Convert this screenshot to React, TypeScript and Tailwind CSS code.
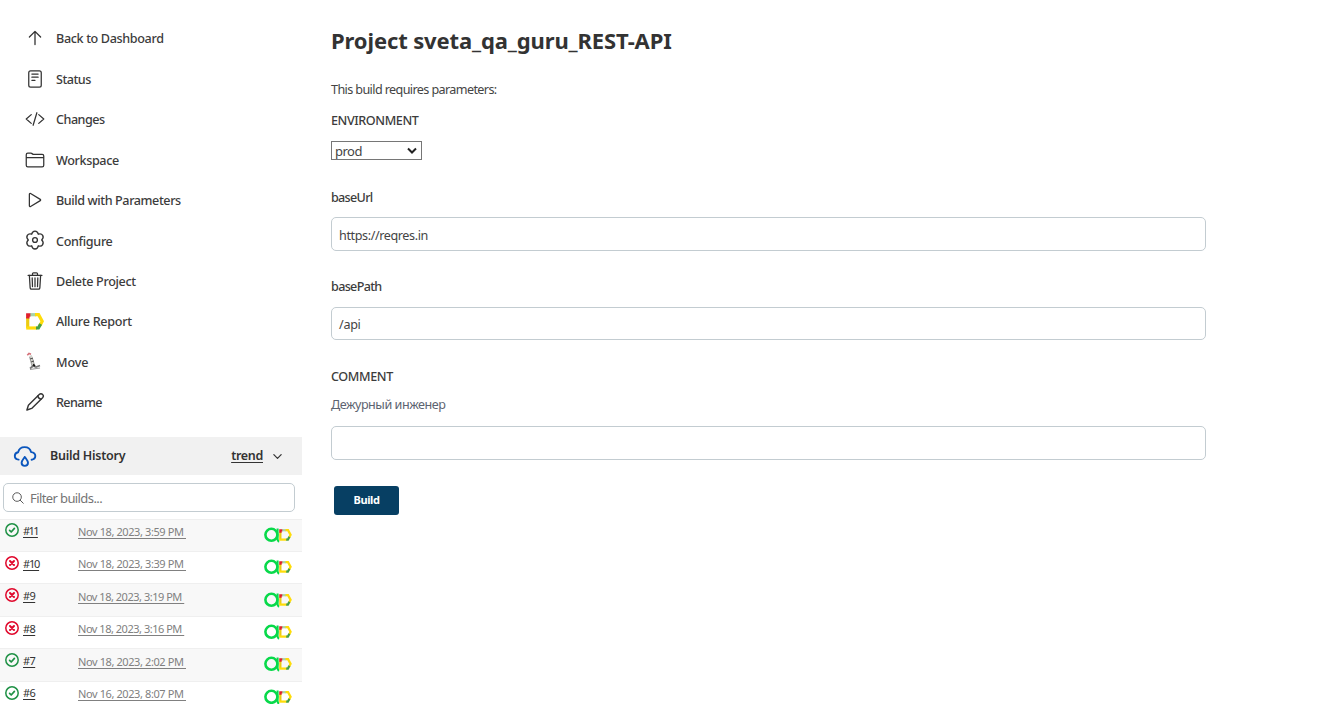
import type { ReactNode } from 'react';
import {
  IoChevronDownOutline,
  IoCodeSlashOutline,
  IoFolderOutline,
  IoPlayOutline,
  IoReaderOutline,
  IoSearchOutline,
  IoTrashOutline,
} from 'react-icons/io5';

function ArrowUpIcon() {
  return (
    <svg viewBox="0 0 20 20" className="size-5" fill="none" stroke="currentColor" strokeWidth="1.3" strokeLinecap="round" strokeLinejoin="round">
      <path d="M10 16.5V3.6M4.4 9L10 3.4L15.6 9" />
    </svg>
  );
}

function GearIcon() {
  return (
    <svg viewBox="0 0 20 20" className="size-5" fill="none" stroke="currentColor" strokeWidth="1.35" strokeLinejoin="round">
      <circle cx="10" cy="10" r="2.4" />
      <path d="M13.3 4.2C12.4 0 7.6 0 6.7 4.2C2.7 2.8 .2 7 3.3 10C.2 13 2.7 17.2 6.7 15.8C7.6 20 12.4 20 13.3 15.8C17.3 17.2 19.8 13 16.7 10C19.8 7 17.3 2.8 13.3 4.2Z" />
    </svg>
  );
}

function PencilIcon() {
  return (
    <svg viewBox="0 0 20 20" className="size-5" fill="none" stroke="currentColor" strokeWidth="1.4" strokeLinecap="round" strokeLinejoin="round">
      <path d="M1.9 18L3.4 13.2L14.2 2.5C15.2 1.5 16.7 1.5 17.6 2.5C18.5 3.4 18.5 4.8 17.6 5.8L6.7 16.4L1.9 18Z" />
      <path d="M12.8 4C13.2 5.8 14.3 6.9 16.1 7.1" />
    </svg>
  );
}

function AllureIcon({ className }: { className: string }) {
  return (
    <svg viewBox="0 0 18 17" className={className} fill="none" strokeWidth="3.2">
      <path d="M1.7 4V15" stroke="#eccb12" />
      <path d="M4 1.7H10" stroke="#a9d3aa" />
      <path d="M9 1.7H12.6L16.2 8.3L14 12.4" stroke="#ffdc0a" />
      <path d="M11 15H.2" stroke="#ffdc0a" />
      <path d="M14.6 11L12.4 15H10" stroke="#44a047" />
      <path d="M.2 2H4.4M1.8 .4V5.4" stroke="#e01f2d" strokeWidth="3.4" />
    </svg>
  );
}

function MoveIcon() {
  return (
    <svg viewBox="0 0 20 20" className="size-5" fill="none">
      <path d="M5.5 3.5L8.8 15" stroke="#d2d2cc" strokeWidth="2.8" />
      <path d="M4.6 5L7.2 15M7.4 6L9.8 14" stroke="#777" strokeWidth=".6" />
      <path d="M5 7L8 6M6 10L9 9" stroke="#333" strokeWidth=".8" />
      <path d="M2.3 3.3L4 1.5L6 2.2" stroke="#d47078" strokeWidth="1.6" />
      <path d="M5 16.5L8 14L11 15L15 13.5" stroke="#777" strokeWidth="1.8" />
      <path d="M5 17.5L15 16" stroke="#999" strokeWidth="1.2" />
      <path d="M8 12.5L10 14" stroke="#111" strokeWidth="1.6" />
    </svg>
  );
}

function CloudIcon() {
  return (
    <svg viewBox="0 0 24 24" className="size-6" fill="none" stroke="#0b56bd" strokeWidth="1.9" strokeLinecap="round" strokeLinejoin="round">
      <path d="M5.6 15.6C3.4 15.4 1.8 14 1.8 12C1.8 10 3.1 8.6 5.1 8.2C5.9 5.1 8.4 3.1 11.6 3.1C15 3.1 17.4 5.1 18.1 8.1C20.7 8.3 22.3 9.8 22.3 12.1C22.3 14.1 20.9 15.5 18.6 15.7" />
      <path d="M11.8 12.9C11 14.3 8.6 16.7 8.6 18.8C8.6 20.7 10 21.9 11.8 21.9C13.6 21.9 15 20.7 15 18.8C15 16.7 12.6 14.3 11.8 12.9Z" />
    </svg>
  );
}

function ResultIcon({ ok }: { ok: boolean }) {
  return (
    <svg viewBox="0 0 14 14" className="size-[14px] shrink-0" fill="none" stroke={ok ? '#1f9145' : '#e0082c'} strokeLinecap="round" strokeLinejoin="round">
      <circle cx="7" cy="7" r="6.2" strokeWidth="1.5" />
      {ok ? <path d="M4.6 7.4L6.2 9L9.4 5.4" strokeWidth="1.7" /> : <path d="M5 5L9 9M9 5L5 9" strokeWidth="2" />}
    </svg>
  );
}

function ReportBadges() {
  return (
    <span className="flex items-start">
      <svg viewBox="0 0 16 16" className="size-4" fill="none" stroke="#08d94a" strokeWidth="2.6">
        <circle cx="7.4" cy="7.8" r="6" />
        <path d="M13.6 1.4V11.5C13.6 13.4 14 14.4 15.2 14.6" strokeWidth="2" />
      </svg>
      <AllureIcon className="-ml-px mt-[2px] h-3 w-[13px]" />
    </span>
  );
}

const tasks: { icon: ReactNode; label: string; spacing: string }[] = [
  { icon: <ArrowUpIcon />, label: 'Back to Dashboard', spacing: 'tracking-[-0.36px]' },
  { icon: <IoReaderOutline />, label: 'Status', spacing: 'tracking-[-0.5px]' },
  { icon: <IoCodeSlashOutline />, label: 'Changes', spacing: 'tracking-[-0.5px]' },
  { icon: <IoFolderOutline />, label: 'Workspace', spacing: 'tracking-[-0.38px]' },
  { icon: <IoPlayOutline />, label: 'Build with Parameters', spacing: 'tracking-[-0.41px]' },
  { icon: <GearIcon />, label: 'Configure', spacing: 'tracking-[-0.33px]' },
  { icon: <IoTrashOutline />, label: 'Delete Project', spacing: 'tracking-[-0.33px]' },
  { icon: <AllureIcon className="h-[17px] w-[18px]" />, label: 'Allure Report', spacing: 'tracking-[-0.27px]' },
  { icon: <MoveIcon />, label: 'Move', spacing: 'tracking-[-0.1px]' },
  { icon: <PencilIcon />, label: 'Rename', spacing: 'tracking-[-0.6px]' },
];

const builds = [
  { id: '#11', ok: true, date: 'Nov 18, 2023, 3:59 PM', spacing: 'tracking-[-1.6px]', dateSpacing: 'tracking-[-0.4px]' },
  { id: '#10', ok: false, date: 'Nov 18, 2023, 3:39 PM', spacing: 'tracking-[-1.2px]', dateSpacing: 'tracking-[-0.4px]' },
  { id: '#9', ok: false, date: 'Nov 18, 2023, 3:19 PM', spacing: 'tracking-[-0.6px]', dateSpacing: 'tracking-[-0.48px]' },
  { id: '#8', ok: false, date: 'Nov 18, 2023, 3:16 PM', spacing: 'tracking-[-0.6px]', dateSpacing: 'tracking-[-0.48px]' },
  { id: '#7', ok: true, date: 'Nov 18, 2023, 2:02 PM', spacing: 'tracking-[-0.6px]', dateSpacing: 'tracking-[-0.4px]' },
  { id: '#6', ok: true, date: 'Nov 16, 2023, 8:07 PM', spacing: 'tracking-[-0.6px]', dateSpacing: 'tracking-[-0.4px]' },
];

export default function App() {
  return (
    <div className="flex h-[704px] w-[1324px] overflow-hidden bg-white font-['Noto_Sans',sans-serif] text-[13px] text-[#333]">
      <aside className="w-[302px] shrink-0 pt-[18px]">
        <nav className="h-[419px]">
          {tasks.map((t) => (
            <a key={t.label} className="flex h-[40.45px] items-center pl-[25px]">
              <span className="flex size-5 items-center justify-center text-[20px]">{t.icon}</span>
              <span className={`ml-[11px] whitespace-nowrap pt-[2.4px] text-[12.6px] font-medium leading-5 text-[#3c3c3c] ${t.spacing}`}>{t.label}</span>
            </a>
          ))}
        </nav>
        <header className="flex h-[38px] items-center bg-[#f1f1f1] pl-[13px] pr-[18px] text-[12.5px] font-semibold">
          <CloudIcon />
          <span className="ml-[13px] tracking-[-0.25px]">Build History</span>
          <a className="ml-auto tracking-[-0.3px] underline underline-offset-2">trend</a>
          <IoChevronDownOutline className="ml-[8px] size-[13px]" />
        </header>
        <div className="ml-[3px] mt-2 flex h-[29px] w-[292px] items-center rounded-[5px] border border-[#c3ccd1] pl-[7px] text-[#757575]">
          <IoSearchOutline className="size-[14px] text-[#444]" />
          <span className="ml-[5px] pt-[2px] tracking-[-0.6px]">Filter builds...</span>
        </div>
        <ul className="mt-[6.6px]">
          {builds.map((b) => (
            <li key={b.id} className="flex h-[32.45px] items-start border-t border-[#efefef] pl-[5px] pr-[10px] text-[11px] leading-[15px] odd:bg-[#f8f8f8]">
              <span className="mt-[3.9px]"><ResultIcon ok={b.ok} /></span>
              <a className={`ml-1 mt-[3.6px] w-[55px] ${b.spacing}`}><span className="underline underline-offset-2">{b.id}</span></a>
              <a className={`mt-[4.2px] whitespace-pre text-[#808080] underline underline-offset-2 ${b.dateSpacing}`}>{b.date + ' '}</a>
              <span className="ml-auto mt-[7.1px]"><ReportBadges /></span>
            </li>
          ))}
        </ul>
      </aside>
      <main className="ml-[29px] w-[875px] pt-[24px]">
        <h1 className="h-8 text-[22px] font-bold leading-8 tracking-[-0.12px]">Project sveta_qa_guru_REST-API</h1>
        <p className="mt-[24px] h-5 text-[12.6px] leading-5 tracking-[-0.61px] text-[#444]">This build requires parameters:</p>
        <label className="mt-[11px] block h-5 text-[12.6px] font-medium leading-5 tracking-[-0.42px] text-[#3c3c3c]">ENVIRONMENT</label>
        <div className="mt-[10px] flex h-[19px] w-[91px] items-center justify-between border border-[#767676] pl-[3px] pr-1">
          <span className="leading-[18px] tracking-[-0.5px] text-[#444]">prod</span>
          <svg viewBox="0 0 10 8" className="h-2 w-[10px]" fill="none" stroke="#222" strokeWidth="2"><path d="M1 1.5L5 5.5L9 1.5" /></svg>
        </div>
        <label className="mt-[28px] block h-5 text-[12.6px] font-medium leading-5 tracking-[-0.7px] text-[#3c3c3c]">baseUrl</label>
        <div className="mt-[9px] flex h-[34px] items-center rounded-[5px] border border-[#c3ccd1] pl-[7px] pt-[4px] text-[12.6px] tracking-[-0.4px] text-[#444]">https://reqres.in</div>
        <label className="mt-[26px] block h-5 text-[12.6px] font-medium leading-5 tracking-[-0.68px] text-[#3c3c3c]">basePath</label>
        <div className="mt-[10px] flex h-[33px] items-center rounded-[5px] border border-[#c3ccd1] pl-[7px] pt-[3px] text-[12.6px] tracking-[-0.3px] text-[#444]">/api</div>
        <label className="mt-[27px] block h-5 text-[12.6px] font-medium leading-5 tracking-[-0.4px] text-[#3c3c3c]">COMMENT</label>
        <p className="mt-2 h-5 text-[12.6px] leading-5 tracking-[-0.48px] text-[#5c6370]">Дежурный инженер</p>
        <div className="mt-[11px] h-[34px] rounded-[5px] border border-[#c3ccd1]" />
        <button className="ml-[3px] mt-[26px] block h-[29px] w-[65px] rounded-[3px] bg-[#073f63] text-[11px] font-bold tracking-[-0.4px] text-white">Build</button>
      </main>
    </div>
  );
}
